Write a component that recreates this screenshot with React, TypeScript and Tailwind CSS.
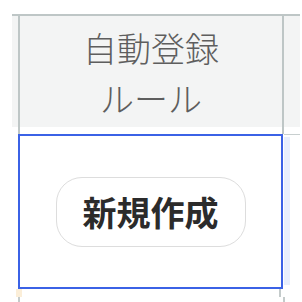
export default function App() {
  const font = { fontFamily: '"Noto Sans CJK JP", "Noto Sans", sans-serif' };
  return (
    <div className="w-[302px] h-[302px] bg-white overflow-hidden pt-[14px]" style={font}>
      {/* header row */}
      <div className="ml-[12px] w-[288px] h-[113px] flex bg-[#f3f4f4] border-t-2 border-[#bec6c6]">
        <div className="w-[6px]" />
        <div className="w-[266px] border-l-2 border-r-2 border-[#bec6c6] flex flex-col items-center pt-[7px] text-[34px] leading-[50px] font-light text-[#5e5e5e]">
          <span>自動登録</span>
          <span>ルール</span>
        </div>
      </div>

      {/* body row */}
      <div className="flex">
        <div className="ml-[18px] w-[266px] flex flex-col">
          <div className="h-[7px] border-l-2 border-r-2 border-[#bec6c6]" />
          <div className="h-[155px] w-[265px] border-2 border-[#3b62e6] bg-white flex items-center justify-center">
            <button className="w-[190px] h-[70px] rounded-[26px] border border-[#dddddd] bg-white text-[34px] font-bold text-[#2b2b2b] leading-none">
              新規作成
            </button>
          </div>
        </div>
        <div className="flex flex-col">
          <div className="h-[8px] w-[16px] border-b border-[#c8cfcf]" />
          <div className="mt-[2px] h-[148px] w-[6px] bg-[#e8effd]" />
        </div>
      </div>

      {/* bottom edge */}
      <div className="flex">
        <div className="ml-[16px] w-[6px] h-[8px] bg-[#fbeed8]" />
        <div className="ml-[257px] w-[2px] h-[8px] bg-[#c4cbcb]" />
      </div>
      <div className="flex">
        <div className="ml-[18px] w-[2px] h-[6px] bg-[#c4cbcb]" />
        <div className="ml-[263px] w-[2px] h-[6px] bg-[#c4cbcb]" />
      </div>
    </div>
  );
}
